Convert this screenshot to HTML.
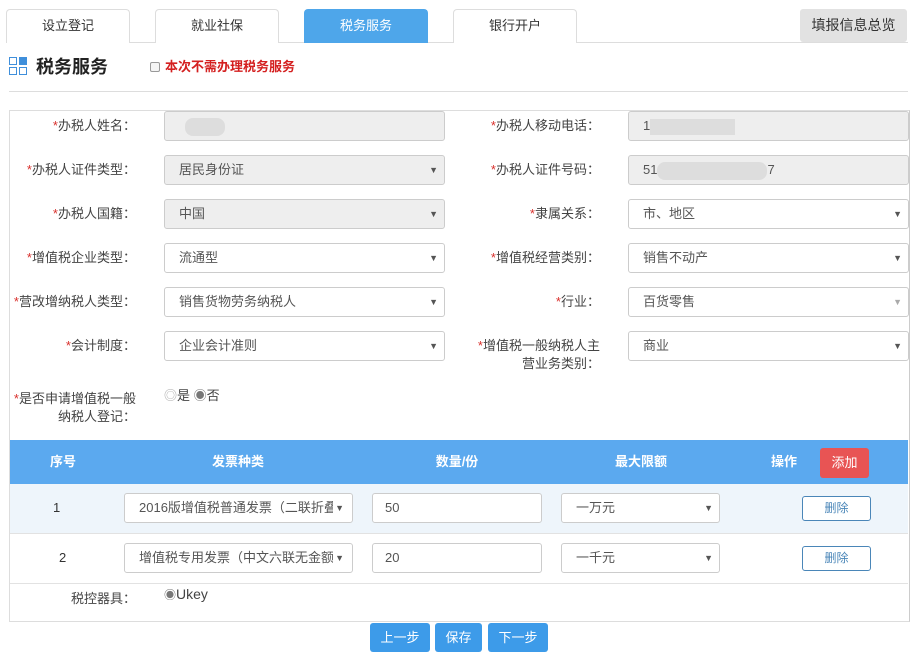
<!DOCTYPE html>
<html><head><meta charset="utf-8"><style>
*{box-sizing:border-box;margin:0;padding:0}
body{width:919px;height:659px;background:#fff;font-family:"Liberation Sans","Noto Sans CJK SC",sans-serif;font-size:13px;color:#333;position:relative;overflow:hidden}
.a{position:absolute}
.tab{position:absolute;top:9px;height:34px;width:124px;border:1px solid #ddd;border-bottom:none;border-radius:4px 4px 0 0;text-align:center;line-height:32px;font-size:13px;color:#333;background:#fff}
.lbl{position:absolute;text-align:right;font-size:13px;color:#444;line-height:18px}
.lbl b{color:#d9302c;font-weight:normal}
.inp{position:absolute;height:30px;border:1px solid #ccc;border-radius:3px;background:#fff;padding-left:14px;line-height:28px;font-size:13px;color:#555}
.dis{background:#eee}
.arr{position:absolute;right:6px;top:0;font-size:9px;color:#555}
.th{position:absolute;top:440px;line-height:43px;color:#fff;font-weight:bold;font-size:13px;text-align:center}
.btn{position:absolute;top:623px;height:29px;background:#3d9be9;color:#fff;border-radius:3px;text-align:center;line-height:29px;font-size:13px}
.del{position:absolute;left:802px;width:69px;height:25px;border:1px solid #4a86b8;border-radius:3px;color:#4a86b8;text-align:center;line-height:23px;font-size:12px;background:#fff}
</style></head><body>
<div class="a" style="left:6px;top:42px;width:902px;height:1px;background:#ddd"></div>
<div class="tab" style="left:6px">设立登记</div>
<div class="tab" style="left:155px">就业社保</div>
<div class="tab" style="left:304px;background:#4ea6ea;border-color:#4ea6ea;color:#fff">税务服务</div>
<div class="tab" style="left:453px">银行开户</div>
<div class="a" style="left:800px;top:9px;width:107px;height:33px;background:#e2e2e2;border-radius:3px;text-align:center;line-height:33px;font-size:14px;color:#333">填报信息总览</div>

<svg class="a" style="left:9px;top:57px" width="18" height="18"><rect x="0.5" y="0.5" width="7" height="7" fill="none" stroke="#3f8fdb"/><rect x="10" y="0" width="8" height="8" fill="#3f8fdb"/><rect x="0.5" y="10.5" width="7" height="7" fill="none" stroke="#3f8fdb"/><rect x="10.5" y="10.5" width="7" height="7" fill="none" stroke="#3f8fdb"/></svg>
<div class="a" style="left:36px;top:55px;font-size:18px;font-weight:bold;color:#222;line-height:24px">税务服务</div>
<div class="a" style="left:150px;top:62px;width:10px;height:10px;border:1px solid #999;border-radius:2px;background:#f4f4f4"></div>
<div class="a" style="left:165px;top:58px;font-size:13px;font-weight:bold;color:#d42020;line-height:18px">本次不需办理税务服务</div>
<div class="a" style="left:9px;top:91px;width:899px;height:1px;background:#ddd"></div>

<div class="a" style="left:9px;top:110px;width:901px;height:512px;border:1px solid #ddd;border-right:1px solid #ccc"></div>

<div class="lbl" style="left:10px;width:126px;top:117px"><b>*</b>办税人姓名：</div>
<div class="inp dis" style="left:164px;top:111px;width:281px"><span style="display:inline-block;width:40px;height:18px;background:#ddd;border-radius:8px;vertical-align:middle;margin-left:6px"></span></div>
<div class="lbl" style="left:470px;width:130px;top:117px"><b>*</b>办税人移动电话：</div>
<div class="inp dis" style="left:628px;top:111px;width:281px">1<span style="display:inline-block;width:85px;height:16px;background:#ddd;vertical-align:middle"></span></div>

<div class="lbl" style="left:10px;width:126px;top:161px"><b>*</b>办税人证件类型：</div>
<div class="inp dis" style="left:164px;top:155px;width:281px">居民身份证<span class="arr">▼</span></div>
<div class="lbl" style="left:470px;width:130px;top:161px"><b>*</b>办税人证件号码：</div>
<div class="inp dis" style="left:628px;top:155px;width:281px">51<span style="display:inline-block;width:110px;height:18px;background:#ddd;vertical-align:middle;border-radius:8px"></span>7</div>

<div class="lbl" style="left:10px;width:126px;top:205px"><b>*</b>办税人国籍：</div>
<div class="inp dis" style="left:164px;top:199px;width:281px">中国<span class="arr">▼</span></div>
<div class="lbl" style="left:470px;width:130px;top:205px"><b>*</b>隶属关系：</div>
<div class="inp" style="left:628px;top:199px;width:281px">市、地区<span class="arr">▼</span></div>

<div class="lbl" style="left:10px;width:126px;top:249px"><b>*</b>增值税企业类型：</div>
<div class="inp" style="left:164px;top:243px;width:281px">流通型<span class="arr">▼</span></div>
<div class="lbl" style="left:470px;width:130px;top:249px"><b>*</b>增值税经营类别：</div>
<div class="inp" style="left:628px;top:243px;width:281px">销售不动产<span class="arr">▼</span></div>

<div class="lbl" style="left:0px;width:136px;top:293px"><b>*</b>营改增纳税人类型：</div>
<div class="inp" style="left:164px;top:287px;width:281px">销售货物劳务纳税人<span class="arr">▼</span></div>
<div class="lbl" style="left:470px;width:130px;top:293px"><b>*</b>行业：</div>
<div class="inp" style="left:628px;top:287px;width:281px">百货零售<span class="arr" style="color:#aaa">▼</span></div>

<div class="lbl" style="left:10px;width:126px;top:337px"><b>*</b>会计制度：</div>
<div class="inp" style="left:164px;top:331px;width:281px">企业会计准则<span class="arr">▼</span></div>
<div class="lbl" style="left:470px;width:130px;top:337px"><b>*</b>增值税一般纳税人主<br>营业务类别：</div>
<div class="inp" style="left:628px;top:331px;width:281px">商业<span class="arr">▼</span></div>

<div class="lbl" style="left:10px;width:126px;top:390px;text-align:right"><b>*</b>是否申请增值税一般<br>纳税人登记：</div>
<div class="a" style="left:164px;top:387px;font-size:13px;line-height:18px;color:#444"><span style="color:#aaa">◎</span>是 <span style="color:#777">◉</span>否</div>

<div class="a" style="left:10px;top:440px;width:898px;height:44px;background:#5ba9ef"></div>
<div class="th" style="left:33px;width:60px">序号</div>
<div class="th" style="left:178px;width:120px">发票种类</div>
<div class="th" style="left:417px;width:80px">数量/份</div>
<div class="th" style="left:591px;width:100px">最大限额</div>
<div class="th" style="left:764px;width:40px">操作</div>
<div class="a" style="left:820px;top:448px;width:49px;height:30px;background:#e85454;border-radius:3px;color:#fff;text-align:center;line-height:30px;font-size:13px">添加</div>

<div class="a" style="left:10px;top:484px;width:898px;height:50px;background:#eef5fb;border-bottom:1px solid #e2e2e2"></div>
<div class="a" style="left:10px;top:534px;width:898px;height:50px;background:#fff;border-bottom:1px solid #e2e2e2"></div>
<div class="a" style="left:53px;top:500px;font-size:13px">1</div>
<div class="inp" style="left:124px;top:493px;width:229px;white-space:nowrap;overflow:hidden">2016版增值税普通发票（二联折叠<span class="arr" style="background:#fff;padding:0 2px;top:0">▼</span></div>
<div class="inp" style="left:372px;top:493px;width:170px;padding-left:12px">50</div>
<div class="inp" style="left:561px;top:493px;width:159px">一万元<span class="arr">▼</span></div>
<div class="del" style="top:496px">删除</div>

<div class="a" style="left:59px;top:550px;font-size:13px">2</div>
<div class="inp" style="left:124px;top:543px;width:229px;white-space:nowrap;overflow:hidden">增值税专用发票（中文六联无金额<span class="arr" style="background:#fff;padding:0 2px">▼</span></div>
<div class="inp" style="left:372px;top:543px;width:170px;padding-left:12px">20</div>
<div class="inp" style="left:561px;top:543px;width:159px">一千元<span class="arr">▼</span></div>
<div class="del" style="top:546px">删除</div>

<div class="lbl" style="left:10px;width:126px;top:590px">税控器具：</div>
<div class="a" style="left:164px;top:585px;font-size:14px;line-height:18px;color:#444"><span style="color:#777;font-size:12px">◉</span>Ukey</div>

<div class="btn" style="left:370px;width:60px">上一步</div>
<div class="btn" style="left:435px;width:47px">保存</div>
<div class="btn" style="left:488px;width:60px">下一步</div>
</body></html>
